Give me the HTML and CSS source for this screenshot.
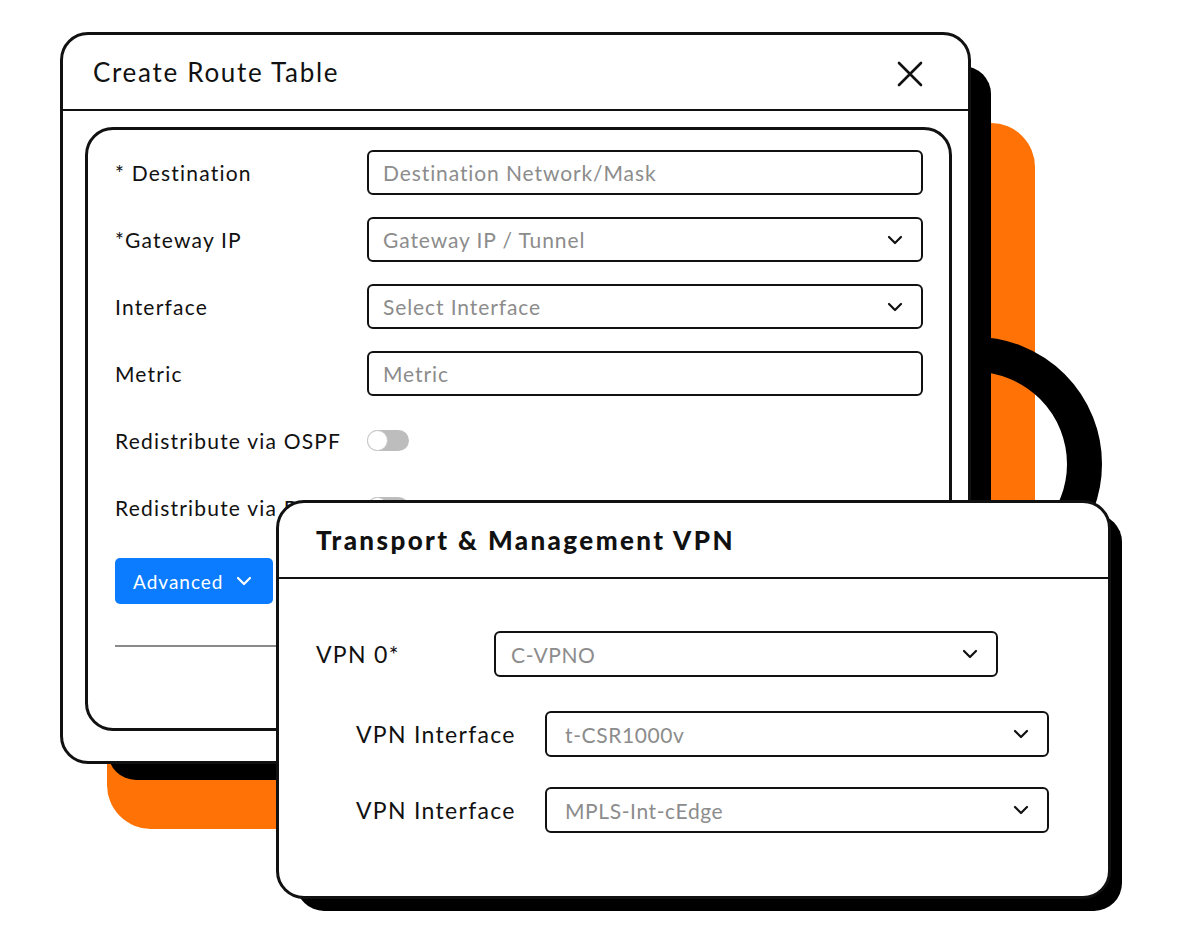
FILE: index.html
```html
<!DOCTYPE html>
<html lang="en">
<head>
<meta charset="UTF-8" />
<meta name="viewport" content="width=device-width, initial-scale=1" />
<title>Route Table &amp; VPN</title>
<link rel="stylesheet" href="styles.css">
</head>
<body>

<div class="scene">
  <!-- decorative backdrop -->
  <div class="deco orange"></div>
  <div class="deco ring"></div>
  <div class="deco shadow shadow-route"></div>

  <!-- Create Route Table window -->
  <div class="win win-route">
    <div class="win-head">
      <span class="win-title">Create Route Table</span>
      <svg class="close" width="26" height="26" viewBox="0 0 26 26" aria-label="Close">
        <path d="M2 2 L24 24 M24 2 L2 24" stroke="#111" stroke-width="2.6" stroke-linecap="round" fill="none"/>
      </svg>
    </div>

    <div class="panel">
      <div class="form-row">
        <div class="form-label">* Destination</div>
        <div class="field">Destination Network/Mask</div>
      </div>
      <div class="form-row">
        <div class="form-label">*Gateway IP</div>
        <div class="field">Gateway IP / Tunnel
          <svg class="chev" width="16" height="10" viewBox="0 0 16 10"><path d="M2 2 L8 8 L14 2" stroke="#111" stroke-width="2.2" fill="none" stroke-linecap="round" stroke-linejoin="round"/></svg>
        </div>
      </div>
      <div class="form-row">
        <div class="form-label">Interface</div>
        <div class="field">Select Interface
          <svg class="chev" width="16" height="10" viewBox="0 0 16 10"><path d="M2 2 L8 8 L14 2" stroke="#111" stroke-width="2.2" fill="none" stroke-linecap="round" stroke-linejoin="round"/></svg>
        </div>
      </div>
      <div class="form-row">
        <div class="form-label">Metric</div>
        <div class="field">Metric</div>
      </div>
      <div class="form-row">
        <div class="form-label">Redistribute via OSPF</div>
        <div class="toggle"><span class="knob"></span></div>
      </div>
      <div class="form-row">
        <div class="form-label">Redistribute via BGP</div>
        <div class="toggle"><span class="knob"></span></div>
      </div>

      <button class="btn-adv">Advanced
        <svg width="16" height="10" viewBox="0 0 16 10"><path d="M2 2 L8 8 L14 2" stroke="#fff" stroke-width="2.2" fill="none" stroke-linecap="round" stroke-linejoin="round"/></svg>
      </button>

      <div class="rule"></div>
    </div>
  </div>

  <div class="deco shadow shadow-vpn"></div>

  <!-- Transport & Management VPN window -->
  <div class="win win-vpn">
    <div class="win-head vpn-head">
      <span class="vpn-title">Transport &amp; Management VPN</span>
    </div>
    <div class="vpn-body">
      <div class="vpn-row">
        <div class="vpn-label">VPN 0*</div>
        <div class="vpn-field">C-VPNO
          <svg class="chev" width="16" height="10" viewBox="0 0 16 10"><path d="M2 2 L8 8 L14 2" stroke="#111" stroke-width="2.2" fill="none" stroke-linecap="round" stroke-linejoin="round"/></svg>
        </div>
      </div>
      <div class="vpn-row sub">
        <div class="vpn-label">VPN Interface</div>
        <div class="vpn-field">t-CSR1000v
          <svg class="chev" width="16" height="10" viewBox="0 0 16 10"><path d="M2 2 L8 8 L14 2" stroke="#111" stroke-width="2.2" fill="none" stroke-linecap="round" stroke-linejoin="round"/></svg>
        </div>
      </div>
      <div class="vpn-row sub last">
        <div class="vpn-label">VPN Interface</div>
        <div class="vpn-field">MPLS-Int-cEdge
          <svg class="chev" width="16" height="10" viewBox="0 0 16 10"><path d="M2 2 L8 8 L14 2" stroke="#111" stroke-width="2.2" fill="none" stroke-linecap="round" stroke-linejoin="round"/></svg>
        </div>
      </div>
    </div>
  </div>
</div>

</body>
</html>
```

FILE: styles.css
```css
body {
  margin: 0;
  background: #fff;
  font-family: Lato, 'Liberation Sans', sans-serif;
  color: #111;
}
.scene {
  position: relative;
  width: 1181px;
  height: 948px;
  overflow: hidden;
}
/* backdrop shapes */
.deco {
  position: absolute;
}
.orange {
  left: 107px;
  top: 123px;
  width: 928px;
  height: 706px;
  background: #ff7306;
  border-radius: 44px;
}
.ring {
  left: 848px;
  top: 337px;
  width: 254px;
  height: 254px;
  box-sizing: border-box;
  border: 35px solid #000;
  border-radius: 50%;
}
.shadow {
  background: #000;
  border-radius: 28px;
}
.shadow-route {
  left: 108px;
  top: 66px;
  width: 883px;
  height: 714px;
}
.shadow-vpn {
  left: 296px;
  top: 514px;
  width: 826px;
  height: 397px;
}
/* windows */
.win {
  position: absolute;
  box-sizing: border-box;
  background: #fff;
  border: 3px solid #111;
  border-radius: 28px;
}
.win-route {
  left: 60px;
  top: 32px;
  width: 911px;
  height: 732px;
}
.win-head {
  display: flex;
  align-items: center;
  justify-content: space-between;
  height: 74px;
  padding: 0 45px 0 30px;
  border-bottom: 2px solid #111;
}
.win-title {
  font-size: 26px;
  letter-spacing: 1.7px;
}
.close {
  margin-top: 4px;
}
.panel {
  box-sizing: border-box;
  height: 604px;
  margin: 16px 16px 0 22px;
  padding: 20px 26px 0 27px;
  border: 3px solid #111;
  border-radius: 28px;
}
.form-row {
  display: flex;
  align-items: center;
  height: 45px;
  margin-bottom: 22px;
}
.form-label {
  width: 252px;
  font-size: 21px;
  letter-spacing: 1.2px;
}
.field {
  flex: 1;
  box-sizing: border-box;
  height: 45px;
  display: flex;
  align-items: center;
  justify-content: space-between;
  padding: 0 18px 0 14px;
  border: 2px solid #111;
  border-radius: 6px;
  font-size: 21px;
  letter-spacing: 0.9px;
  color: #8c8c8c;
}
.toggle {
  position: relative;
  width: 42px;
  height: 21px;
  border-radius: 11px;
  background: #bdbdbd;
}
.knob {
  position: absolute;
  left: 0;
  top: 0;
  box-sizing: border-box;
  width: 21px;
  height: 21px;
  border-radius: 50%;
  background: #fff;
  border: 1px solid #c8c8c8;
}
.btn-adv {
  display: flex;
  align-items: center;
  gap: 12px;
  margin-top: 28px;
  width: 158px;
  height: 46px;
  padding: 0 0 0 18px;
  border: none;
  border-radius: 5px;
  background: #0b7cff;
  color: #fff;
  font-family: inherit;
  font-size: 19px;
  letter-spacing: 1px;
}
.rule {
  margin-top: 41px;
  height: 2px;
  background: #8a8a8a;
}
/* VPN window */
.win-vpn {
  left: 276px;
  top: 500px;
  width: 835px;
  height: 399px;
}
.vpn-head {
  height: 74px;
  padding-left: 37px;
}
.vpn-title {
  font-size: 26px;
  font-weight: 900;
  letter-spacing: 2.4px;
}
.vpn-body {
  padding: 52px 0 0 37px;
}
.vpn-row {
  display: flex;
  align-items: center;
  margin-bottom: 34px;
}
.vpn-row.last {
  margin-top: -4px;
}
.vpn-row.sub {
  padding-left: 40px;
}
.vpn-label {
  width: 178px;
  font-size: 23px;
  letter-spacing: 1.3px;
}
.sub .vpn-label {
  width: 189px;
}
.vpn-field {
  box-sizing: border-box;
  width: 504px;
  height: 46px;
  display: flex;
  align-items: center;
  justify-content: space-between;
  padding: 0 18px 0 15px;
  border: 2px solid #111;
  border-radius: 6px;
  font-size: 21px;
  letter-spacing: 0.6px;
  color: #8c8c8c;
}
.sub .vpn-field {
  padding-left: 18px;
}
```
